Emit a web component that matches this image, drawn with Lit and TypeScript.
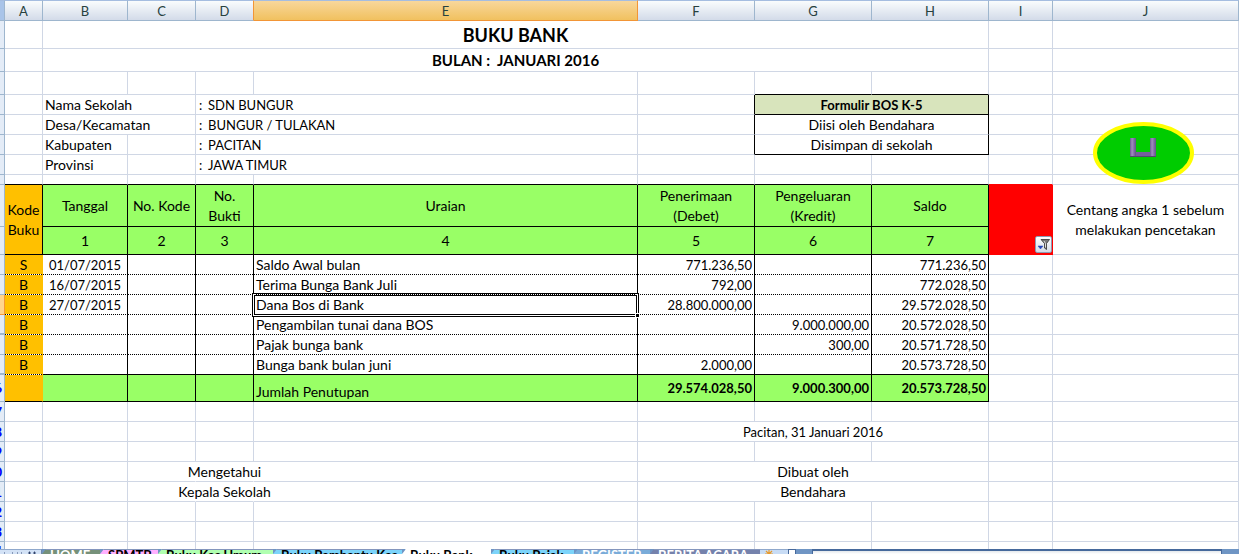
import { LitElement, html, css, svg, nothing, TemplateResult } from 'lit';
import { customElement } from 'lit/decorators.js';
import { styleMap } from 'lit/directives/style-map.js';

interface Cell {
  v?: unknown;
  c?: string;
  span?: number;
  rows?: number;
}
interface Row {
  h: string;
  n?: string;
  head?: string;
  cells: Cell[];
}

const blank = (n: number, c = ''): Cell[] => Array.from({ length: n }, () => ({ c }));

const entry = (
  kode: string, tanggal: string, uraian: string, debet: string, kredit: string, saldo: string, last = false,
): Cell[] => {
  const d = last ? 'bk bb' : 'bk dot';
  return [
    { v: kode, c: 'ctr orange dot' },
    { v: tanggal, c: `ctr small ${d}` },
    { c: d },
    { c: d },
    { v: uraian, c: d },
    { v: debet, c: `num ${d}` },
    { v: kredit, c: `num ${d}` },
    { v: saldo, c: `num ${d}` },
    {}, {},
  ];
};

const info = (value: string) => html`<span class="colon">:</span>${value}`;

@customElement('check-badge')
export class CheckBadge extends LitElement {
  static styles = css`
    :host { display: block; line-height: 0; }
    .badge { border: 0; padding: 0; background: none; display: block; }
  `;
  render() {
    return html`<button class="badge" aria-label="Centang">
      <svg width="101" height="62" viewBox="0 0 101 62">
        <defs>
          <linearGradient id="bar" x1="0" x2="1" y1="0" y2="0">
            <stop offset="0" stop-color="#6a5a90" /><stop offset=".35" stop-color="#a08cc0" /><stop offset="1" stop-color="#62508a" />
          </linearGradient>
        </defs>
        <ellipse cx="50.5" cy="31" rx="48.5" ry="29" fill="#00cc00" stroke="#ffff00" stroke-width="4" />
        <path d="M38 30h24v5H38z" fill="#75609c" />
        <path d="M37 16h6v19h-6z" fill="url(#bar)" />
        <path d="M57 16h6v19h-6z" fill="url(#bar)" />
        <path d="M37 34.5h26" stroke="#54466f" />
      </svg>
    </button>`;
  }
}

@customElement('sheet-grid')
export class SheetGrid extends LitElement {
  static styles = css`
    :host { display: block; }
    table {
      width: 100%;
      table-layout: fixed;
      border-collapse: separate;
      border-spacing: 0;
      font: 14px/20px Lato, Carlito, sans-serif;
      color: #000;
    }
    .w-n { width: 5px; } .w-a { width: 38px; } .w-b { width: 85px; } .w-c { width: 68px; }
    .w-d { width: 58px; } .w-m { width: 117px; } .w-i { width: 64px; } .w-j { width: 186px; }
    th, td {
      box-sizing: border-box;
      padding: 0 2px;
      border: 0 solid #d0d7e5;
      border-width: 0 1px 1px 0;
      font-weight: 400;
      text-align: left;
      white-space: nowrap;
      vertical-align: middle;
      line-height: 18px;
    }
    tr.h8 > * { height: 8px; }
    tr.h10 > * { height: 10px; }
    tr.h20 > * { height: 20px; }
    tr.h21 > * { height: 21px; }
    tr.h23 > * { height: 23px; }
    tr.h27 > * { height: 27px; }
    tr.h28 > * { height: 28px; }
    tr.h42 > * { height: 42px; }
    thead th {
      text-align: center;
      color: #27413e;
      border-color: #9eb6ce;
      border-top: 1px solid #a5bde0;
      background: linear-gradient(#f9fcfd, #d3dbe9);
    }
    thead th.corner { background: #a9c4e9; padding: 0; }
    thead th.active { background: linear-gradient(#f8d79b, #f1c15f); border-color: #a5bde0 #f29536 #f29536; }
    thead th.pre { border-right-color: #f29536; }
    .rownum { padding: 0; border-color: #9eb6ce; background: #e4ecf7; }
    .rownum.sel { background: #ffd58d; border-color: #f29536; }
    .rownum.skip { border-bottom-width: 2px; }
    .rownum div { display: flex; justify-content: flex-end; overflow: hidden; height: 18px; padding-right: 2px; color: #00f; font-weight: 700; }
    .h8 .rownum div { height: 7px; }
    .ctr { text-align: center; }
    .small { font-size: 13px; }
    .num { text-align: right; font-size: 13px; }
    .wrap { white-space: normal; line-height: 20px; padding: 0; }
    .title { font-size: 18px; font-weight: 700; text-align: center; }
    .sub { font-size: 15px; font-weight: 700; text-align: center; white-space: pre; }
    .bold { font-weight: 700; }
    .nr { border-right-color: transparent; }
    .bk { border-right-color: #000; }
    .bb { border-bottom: 1px solid #000; }
    .dot {
      border-bottom: 0;
      padding-bottom: 1px;
      background-image: repeating-linear-gradient(90deg, #000 0 1px, #fff 1px 2px);
      background-size: 100% 1px;
      background-position: 0 100%;
      background-repeat: no-repeat;
    }
    .orange { background-color: #ffc000; border-right-color: #ffc000; }
    .orange.bk { border-right-color: #000; }
    .green { background: #99ff66; }
    .olive { background: #d8e4bc; }
    .red { background: #f00; border-color: #f00; position: relative; }
    .redline { border-bottom-color: #f00; }
    .low { vertical-align: bottom; }
    .colon { display: inline-block; width: 10px; padding-left: 1px; box-sizing: border-box; }
    .over { display: flex; justify-content: center; }
    .anchor { position: relative; }
    .cursor {
      position: absolute; inset: -2px; border: 3px double #000; pointer-events: none;
      background:
        linear-gradient(#fff, #fff) 0 0 / 3px 100% no-repeat border-box,
        linear-gradient(#fff, #fff) 100% 0 / 3px 100% no-repeat border-box;
    }
    .cursor i { position: absolute; right: -4px; bottom: -4px; width: 3px; height: 3px; background: #000; border: 1px solid #fff; }
    check-badge { position: absolute; left: 40px; top: 7px; z-index: 1; }
    .filter {
      position: absolute; right: 0; bottom: 1px; width: 17px; height: 17px; padding: 0;
      border: 1px solid #8c9cb4; border-radius: 2px; background: linear-gradient(#fff, #d5dbe6);
    }
    .filter svg { display: block; }
  `;

  private rows(): Row[] {
    const filter = html`<button class="filter" aria-label="Filter"><svg width="15" height="15" viewBox="0 0 15 15">
      <path d="M2 9h5l-2.500 3z" fill="#2546b8" stroke="#2546b8" stroke-width=".5" /><path d="M5 2.500h8.500l-3 4v6l-2-1.500v-4.500z" fill="#777" stroke="#333" stroke-width=".8" />
      <path d="M8 4l1.500 2.500v4" stroke="#ddd" fill="none" /></svg></button>`;
    const cursor = html`Dana Bos di Bank<div class="cursor"><i></i></div>`;
    const over = (t: string) => html`<div class="over">${t}</div>`;
    const g = 'ctr green bk bb';
    const total = 'green bk bb num bold';
    const rows: Row[] = [
      { h: 'h28', cells: [{}, { v: 'BUKU BANK', span: 7, c: 'title' }, {}, {}] },
      { h: 'h23', cells: [{}, { v: 'BULAN :  JANUARI 2016', span: 7, c: 'sub' }, {}, {}] },
      { h: 'h23', cells: [...blank(6), { c: 'bb' }, { c: 'bb' }, {}, {}] },
      { h: 'h20', cells: [{}, { v: 'Nama Sekolah', span: 2 }, { v: info('SDN BUNGUR'), span: 2, c: 'small' }, { c: 'bk' }, { v: 'Formulir BOS K-5', span: 2, c: 'ctr small bold olive bk bb' }, {}, {}] },
      { h: 'h20', cells: [{}, { v: 'Desa/Kecamatan', span: 2 }, { v: info('BUNGUR / TULAKAN'), span: 2, c: 'small' }, { c: 'bk' }, { v: 'Diisi oleh Bendahara', span: 2, c: 'ctr bk' }, {}, { v: html`<check-badge></check-badge>`, c: 'anchor' }] },
      { h: 'h20', cells: [{}, { v: 'Kabupaten' }, {}, { v: info('PACITAN'), span: 2, c: 'small' }, { c: 'bk' }, { v: 'Disimpan di sekolah', span: 2, c: 'ctr bk bb' }, {}, {}] },
      { h: 'h20', cells: [{}, { v: 'Provinsi' }, {}, { v: info('JAWA TIMUR'), span: 2, c: 'small' }, ...blank(5)] },
      { h: 'h10', cells: [...blank(8, 'bb'), { c: 'redline' }, {}] },
      { h: 'h42', cells: [
        { v: html`Kode<br />Buku`, rows: 2, c: 'ctr wrap orange bk bb' },
        { v: 'Tanggal', c: g }, { v: 'No. Kode', c: g }, { v: html`No.<br />Bukti`, c: g + ' wrap' }, { v: 'Uraian', c: g },
        { v: html`Penerimaan<br />(Debet)`, c: g + ' wrap' }, { v: html`Pengeluaran<br />(Kredit)`, c: g + ' wrap' }, { v: 'Saldo', c: g },
        { v: filter, rows: 2, c: 'red' },
        { v: html`Centang angka 1 sebelum<br />melakukan pencetakan`, rows: 2, c: 'ctr wrap' },
      ] },
      { h: 'h28', cells: ['1', '2', '3', '4', '5', '6', '7'].map((v) => ({ v, c: g })) },
      { h: 'h20', cells: entry('S', '01/07/2015', 'Saldo Awal bulan', '771.236,50', '', '771.236,50') },
      { h: 'h20', cells: entry('B', '16/07/2015', 'Terima Bunga Bank Juli', '792,00', '', '772.028,50') },
      { h: 'h20', head: 'sel', cells: entry('B', '27/07/2015', '', '28.800.000,00', '', '29.572.028,50') },
      { h: 'h20', head: 'skip', cells: entry('B', '', 'Pengambilan tunai dana BOS', '', '9.000.000,00', '20.572.028,50') },
      { h: 'h20', cells: entry('B', '', 'Pajak bunga bank', '', '300,00', '20.571.728,50') },
      { h: 'h20', head: 'skip', cells: entry('B', '', 'Bunga bank bulan juni', '2.000,00', '', '20.573.728,50', true) },
      { h: 'h27', n: '6', cells: [
        { c: 'orange bb' }, ...blank(3, 'green bk bb'), { v: 'Jumlah Penutupan', c: 'green bk bb low' },
        { v: '29.574.028,50', c: total }, { v: '9.000.300,00', c: total }, { v: '20.573.728,50', c: total }, {}, {},
      ] },
      { h: 'h20', n: '7', cells: blank(10) },
      { h: 'h20', n: '8', cells: [...blank(5), { v: 'Pacitan, 31 Januari 2016', span: 3, c: 'ctr small' }, {}, {}] },
      { h: 'h20', n: '9', cells: blank(10) },
      { h: 'h20', n: '0', cells: [{}, {}, { c: 'nr' }, { v: over('Mengetahui'), c: 'nr' }, {}, { v: 'Dibuat oleh', span: 3, c: 'ctr' }, {}, {}] },
      { h: 'h20', n: '1', cells: [{}, {}, { c: 'nr' }, { v: over('Kepala Sekolah'), c: 'nr' }, {}, { v: 'Bendahara', span: 3, c: 'ctr' }, {}, {}] },
      { h: 'h20', n: '2', cells: blank(10) },
      { h: 'h20', n: '3', cells: blank(10) },
      { h: 'h8', n: '4', cells: blank(10) },
    ];
    rows[12].cells[4] = { v: cursor, c: 'bk dot anchor' };
    return rows;
  }

  render(): TemplateResult {
    return html`<table>
      <colgroup>
        <col class="w-n" /><col class="w-a" /><col class="w-b" /><col class="w-c" /><col class="w-d" /><col />
        <col class="w-m" /><col class="w-m" /><col class="w-m" /><col class="w-i" /><col class="w-j" />
      </colgroup>
      <thead>
        <tr class="h21">
          <th class="corner"></th>
          ${[...'ABCDEFGHIJ'].map((l) => html`<th scope="col" class=${l === 'E' ? 'active small' : l === 'D' ? 'pre small' : 'small'}>${l}</th>`)}
        </tr>
      </thead>
      <tbody>
        ${this.rows().map((r) => html`<tr class=${r.h}>
          <th scope="row" class="rownum ${r.head ?? ''}">${r.n ? html`<div>${r.n}</div>` : nothing}</th>
          ${r.cells.map((c) => html`<td class=${c.c ?? ''} colspan=${c.span ?? 1} rowspan=${c.rows ?? 1}>${c.v ?? nothing}</td>`)}
        </tr>`)}
      </tbody>
    </table>`;
  }
}

const TABS = [
  { t: 'HOME', w: 58, bg: '#76917a', fg: '#fff' },
  { t: 'SPMTB', w: 58, bg: '#ffb0ff', fg: '#000' },
  { t: 'Buku Kas Umum', w: 115, bg: '#b0ffb0', fg: '#000' },
  { t: 'Buku Pembantu Kas', w: 129, bg: '#7cd4fa', fg: '#000' },
  { t: 'Buku Bank', w: 89, bg: '#fff', fg: '#000' },
  { t: 'Buku Pajak', w: 83, bg: '#7cd4fa', fg: '#000' },
  { t: 'REGISTER', w: 76, bg: '#7aacd9', fg: '#fff' },
  { t: 'BERITA ACARA', w: 110, bg: '#7582ac', fg: '#fff' },
];

@customElement('sheet-tabs')
export class SheetTabs extends LitElement {
  static styles = css`
    :host { display: flex; height: 5px; overflow: hidden; background: #6f95c4; font: 700 13px/10px Lato, Carlito, sans-serif; }
    .nav { flex: none; width: 42px; box-sizing: border-box; background: #d3e2f6; border-top: 1px solid #8fa8cc; border-right: 1px solid #6f87ac; }
    .nav svg, .new svg { display: block; }
    .tab {
      flex: none; box-sizing: border-box; height: 11px; padding: 0 0 0 8px; border: 0; border-top: 1px solid #8496bd;
      font: inherit; text-align: left; white-space: nowrap; overflow: hidden;
      clip-path: polygon(4px 0, 100% 0, 100% 5px, 0 5px);
    }
    .tab.on { border-top-color: #fff; }
    .new { flex: none; width: 28px; background: #c8dcf5; border-top: 1px solid #8fa8cc; }
    .new svg { margin-left: 4px; }
    .gap { flex: none; width: 24px; display: flex; }
    .split { width: 6px; background: #fff; border: 1px solid #46699c; border-bottom: 0; }
    .track { flex: 1; margin-right: 17px; background: linear-gradient(#e4e8ec, #fff); border: 1px solid #46699c; border-bottom: 0; border-top-width: 2px; }
  `;
  render() {
    return html`<div class="nav"><svg width="41" height="4" viewBox="0 0 41 4">${svg`<path d="M4 3h1M12 3h1M17 3h1M21 3h1M29 2h1v2h-1zM34 2h1v2h-1z" stroke="#3a4f7a" />`}</svg></div>
      ${TABS.map((t) => html`<button class="tab ${t.t === 'Buku Bank' ? 'on' : ''}" style=${styleMap({ width: `${t.w}px`, background: t.bg, color: t.fg })}>${t.t}</button>`)}
      <div class="new"><svg width="10" height="10" viewBox="0 0 10 10">${svg`<path d="M5 0v8M1 4h8M2 1l6 6M8 1l-6 6" stroke="#e89a2c" stroke-width="1.200" />`}</svg></div>
      <div class="gap"><div class="split"></div></div>
      <div class="track"></div>`;
  }
}

@customElement('app-root')
export class AppRoot extends LitElement {
  static styles = css`
    :host { display: flex; flex-direction: column; height: 100vh; overflow: hidden; background: #fff; }
    .sheet { flex: 1; min-height: 0; overflow: hidden; }
  `;
  render() {
    return html`<sheet-grid class="sheet"></sheet-grid><sheet-tabs></sheet-tabs>`;
  }
}
